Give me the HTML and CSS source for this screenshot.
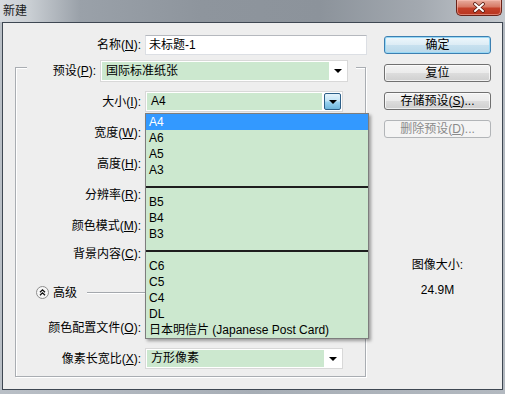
FILE: index.html
```html
<!DOCTYPE html>
<html lang="zh-CN">
<head>
  <meta charset="UTF-8" />
  <meta name="viewport" content="width=device-width, initial-scale=1.0" />
  <title>新建</title>
  <link rel="stylesheet" href="styles.css">
</head>
<body>
  <div class="window">
    <div class="titlebar">
      <span class="title">新建</span>
      <button class="close-btn" aria-label="关闭">
        <svg width="14" height="11" viewBox="0 0 14 11">
          <path d="M3 2 L11 9 M11 2 L3 9" stroke="#5a1a10" stroke-width="3.6" stroke-linecap="round" fill="none"/>
          <path d="M3 2 L11 9 M11 2 L3 9" stroke="#ffffff" stroke-width="2" stroke-linecap="round" fill="none"/>
        </svg>
      </button>
    </div>

    <div class="client">
      <div class="form">
        <div class="name-row">
          <label class="lbl">名称(<u>N</u>):</label>
          <div class="textbox">未标题-1</div>
        </div>

        <div class="group">
          <div class="group-head">
            <div class="head-mask">
              <label class="lbl">预设(<u>P</u>):</label>
              <div class="combo tall">
                <span class="combo-value">国际标准纸张</span>
                <span class="combo-arrow"><i class="tri"></i></span>
              </div>
            </div>
          </div>

          <div class="row size-row">
            <label class="lbl">大小(<u>I</u>):</label>
            <div class="combo">
              <span class="combo-value">A4</span>
              <span class="combo-arrow pressed"><i class="tri"></i></span>
            </div>
          </div>
          <div class="row"><label class="lbl">宽度(<u>W</u>):</label></div>
          <div class="row"><label class="lbl">高度(<u>H</u>):</label></div>
          <div class="row"><label class="lbl">分辨率(<u>R</u>):</label></div>
          <div class="row"><label class="lbl">颜色模式(<u>M</u>):</label></div>
          <div class="row bg-row"><label class="lbl">背景内容(<u>C</u>):</label></div>

          <div class="adv-row">
            <span class="adv-icon">
              <svg width="13" height="13" viewBox="0 0 13 13">
                <circle cx="6.5" cy="6.5" r="6" fill="#f7f7f7" stroke="#8c8c8c"/>
                <path d="M4 6.3 L6.5 3.8 L9 6.3 M4 9.3 L6.5 6.8 L9 9.3" stroke="#111" stroke-width="1.3" fill="none"/>
              </svg>
            </span>
            <span>高级</span>
            <span class="adv-line"></span>
          </div>

          <div class="row profile-row"><label class="lbl">颜色配置文件(<u>O</u>):</label></div>
          <div class="row">
            <label class="lbl">像素长宽比(<u>X</u>):</label>
            <div class="combo">
              <span class="combo-value">方形像素</span>
              <span class="combo-arrow"><i class="tri"></i></span>
            </div>
          </div>
        </div>
      </div>

      <div class="side">
        <button class="btn btn-default">确定</button>
        <button class="btn">复位</button>
        <button class="btn">存储预设(<u>S</u>)...</button>
        <button class="btn" disabled>删除预设(<u>D</u>)...</button>
        <div class="info">
          <div>图像大小:</div>
          <div>24.9M</div>
        </div>
      </div>
    </div>

    <ul class="droplist">
      <li class="sel">A4</li>
      <li>A6</li>
      <li>A5</li>
      <li>A3</li>
      <li class="sep"></li>
      <li>B5</li>
      <li>B4</li>
      <li>B3</li>
      <li class="sep"></li>
      <li>C6</li>
      <li>C5</li>
      <li>C4</li>
      <li>DL</li>
      <li>日本明信片 (Japanese Post Card)</li>
    </ul>
  </div>
</body>
</html>
```

FILE: styles.css
```css
* {
  box-sizing: border-box;
}
body {
  margin: 0;
  width: 505px;
  height: 394px;
  overflow: hidden;
  font-family: "Liberation Sans", "Noto Sans CJK SC", sans-serif;
  font-size: 12px;
  line-height: 16px;
  color: #000;
}
u {
  text-decoration: underline;
}
.window {
  position: relative;
  width: 505px;
  height: 394px;
  display: flex;
  flex-direction: column;
  background: linear-gradient(90deg, #b9bfc6 0, #a7aeb6 50%, #b3b9c0 100%);
}
.titlebar {
  height: 22px;
  display: flex;
  align-items: flex-start;
  background: linear-gradient(90deg, #d7dbe0 0, #c9ced3 30px, #9aa1a9 80px, #8e959d 200px, #8c939b 320px, #a3a9b0 420px, #c4c9ce 505px);
}
.title {
  padding: 3px 0 0 3px;
  color: #1c1c1c;
}
.close-btn {
  margin-left: auto;
  margin-right: 3px;
  width: 46px;
  height: 16px;
  padding: 0;
  border: 1px solid #6a2318;
  border-top: none;
  border-radius: 0 0 5px 5px;
  background: linear-gradient(#e8ad9f 0, #d77a66 45%, #c4412a 55%, #b8351f 100%);
  box-shadow: inset 0 0 0 1px rgba(255, 200, 190, 0.5);
  display: flex;
  align-items: center;
  justify-content: center;
}
.client {
  flex: 1;
  margin: 0 2px 4px;
  border: 1px solid #3e4752;
  background: #eeeeee;
  display: flex;
}
.form {
  width: 364px;
  padding-top: 12px;
}
.lbl {
  text-align: right;
  white-space: nowrap;
}
.name-row {
  display: grid;
  grid-template-columns: 138px 222px;
  column-gap: 4px;
  align-items: center;
  height: 20px;
}
.textbox {
  height: 20px;
  padding: 1px 3px;
  background: #fff;
  border: 1px solid #dcdfe4;
  border-top-color: #b5b8be;
}
.group {
  margin: 12px 0 0 12px;
  width: 351px;
  border: 1px solid #a9adb2;
  box-shadow: inset 1px 1px 0 #fff, 1px 1px 0 #fff;
  padding-bottom: 7px;
  display: flex;
  flex-direction: column;
  gap: 10px;
}
.group-head {
  margin-top: -8px;
  padding-left: 11px;
  height: 22px;
}
.head-mask {
  width: 329px;
  height: 22px;
  background: #eeeeee;
  display: grid;
  grid-template-columns: 69px 248px;
  column-gap: 4px;
  align-items: center;
}
.row {
  display: grid;
  grid-template-columns: 125px 198px;
  column-gap: 4px;
  align-items: center;
  height: 21px;
}
.size-row {
  margin-top: -1px;
}
.bg-row {
  margin-top: -3px;
}
.profile-row {
  margin-top: 4px;
}
.combo {
  display: flex;
  height: 21px;
  padding: 1px;
  background: #fff;
  border: 1px solid #d8d8d8;
}
.combo.tall {
  height: 22px;
}
.combo-value {
  flex: 1;
  padding-left: 4px;
  background: #cce8cf;
  line-height: 17px;
  white-space: nowrap;
}
.combo.tall .combo-value {
  line-height: 18px;
}
.combo-arrow {
  width: 17px;
  display: flex;
  align-items: center;
  justify-content: center;
}
.combo-arrow.pressed {
  margin-left: 2px;
  border: 1px solid #2c5f88;
  border-radius: 2px;
  background: linear-gradient(#e4f3fb 0, #c4e5f6 45%, #98d1ef 55%, #6fb6dc 100%);
}
.tri {
  display: block;
  width: 0;
  height: 0;
  border-left: 4px solid transparent;
  border-right: 4px solid transparent;
  border-top: 4px solid #000;
}
.adv-row {
  margin-top: 8px;
  height: 21px;
  display: flex;
  align-items: center;
  gap: 4px;
  padding-left: 20px;
}
.adv-icon {
  display: flex;
  width: 13px;
  height: 13px;
}
.adv-line {
  flex: 1;
  margin: 0 10px 0 6px;
  border-top: 1px solid #a4a8ad;
  border-bottom: 1px solid #fff;
}
.side {
  width: 107px;
  margin-left: 17px;
  padding-top: 13px;
  display: flex;
  flex-direction: column;
  gap: 10px;
}
.btn {
  height: 18px;
  padding: 0;
  font: inherit;
  line-height: 16px;
  color: #000;
  border: 1px solid #707070;
  border-radius: 3px;
  background: linear-gradient(#f2f2f2 0, #ebebeb 50%, #dddddd 50%, #cfcfcf 100%);
  box-shadow: inset 0 0 0 1px rgba(255, 255, 255, 0.7);
}
.btn-default {
  border-color: #3c7fb1;
  background: linear-gradient(#eef7fc 0, #dcecf5 50%, #c8e1ef 50%, #b9d8ea 100%);
  box-shadow: inset 0 0 0 1px #98d8f5;
}
.btn:disabled {
  border-color: #b2b5b8;
  background: #f4f4f4;
  color: #8a8a8a;
  box-shadow: none;
}
.info {
  margin-top: 109px;
  display: flex;
  flex-direction: column;
  gap: 9px;
  text-align: center;
}
.droplist {
  position: absolute;
  left: 145px;
  top: 113px;
  width: 224px;
  margin: 0;
  padding: 0;
  list-style: none;
  background: #cce8cf;
  border: 1px solid #7d7d7d;
  box-shadow: 2px 2px 3px rgba(0, 0, 0, 0.35);
}
.droplist li {
  height: 16px;
  line-height: 16px;
  padding-left: 3px;
  white-space: nowrap;
}
.droplist li.sel {
  background: #3399ff;
  color: #fff;
}
.droplist li.sep {
  position: relative;
}
.droplist li.sep::before {
  content: "";
  position: absolute;
  left: 0;
  right: 0;
  top: 8px;
  height: 2px;
  background: #1e1e1e;
}
```
